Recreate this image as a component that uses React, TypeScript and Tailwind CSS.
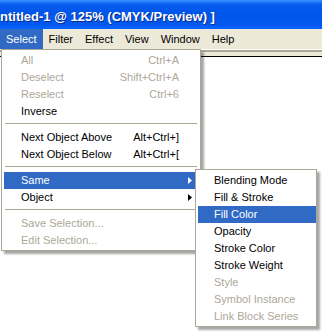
import React from "react";

type Item =
  | { sep: true }
  | { sep?: false; label: string; shortcut?: string; disabled?: boolean; sub?: boolean; active?: boolean };

const selectMenu: Item[] = [
  { label: "All", shortcut: "Ctrl+A", disabled: true },
  { label: "Deselect", shortcut: "Shift+Ctrl+A", disabled: true },
  { label: "Reselect", shortcut: "Ctrl+6", disabled: true },
  { label: "Inverse" },
  { sep: true },
  { label: "Next Object Above", shortcut: "Alt+Ctrl+]" },
  { label: "Next Object Below", shortcut: "Alt+Ctrl+[" },
  { sep: true },
  { label: "Same", sub: true, active: true },
  { label: "Object", sub: true },
  { sep: true },
  { label: "Save Selection...", disabled: true },
  { label: "Edit Selection...", disabled: true },
];

const sameMenu: Item[] = [
  { label: "Blending Mode" },
  { label: "Fill & Stroke" },
  { label: "Fill Color", active: true },
  { label: "Opacity" },
  { label: "Stroke Color" },
  { label: "Stroke Weight" },
  { label: "Style", disabled: true },
  { label: "Symbol Instance", disabled: true },
  { label: "Link Block Series", disabled: true },
];

const menuBar = ["Select", "Filter", "Effect", "View", "Window", "Help"];

function Arrow({ white }: { white?: boolean }) {
  return (
    <svg width="4" height="7" viewBox="0 0 4 7" className="mr-[8px] shrink-0">
      <polygon points="0,0 4,3.5 0,7" fill={white ? "#ffffff" : "#000000"} />
    </svg>
  );
}

function MenuRow({ item, indent }: { item: Item; indent: string }) {
  if (item.sep) {
    return (
      <div className="h-[9px] pt-[3px] pr-[3px]">
        <div className="ml-[1px] h-px bg-[#aca899]" />
      </div>
    );
  }
  const color = item.active ? "bg-[#316ac5] text-white" : item.disabled ? "text-[#aca899]" : "text-black";
  return (
    <div className={`flex h-[17px] items-center whitespace-nowrap ${indent} ${color}`}>
      <span className="flex-1">{item.label}</span>
      {item.shortcut && <span className="pr-[21px]">{item.shortcut}</span>}
      {item.sub && <Arrow white={item.active} />}
    </div>
  );
}

export default function App() {
  return (
    <div className="relative h-[332px] w-[322px] overflow-hidden bg-white text-[11px] font-['Liberation_Sans',Arial,sans-serif]">
      <div className="flex h-[29px] items-center pt-[4px] bg-[linear-gradient(to_bottom,#3d95ff_0px,#0a5ef0_4px,#0055ea_12px,#0058ee_24px,#0863ff_29px)]">
        <span className="whitespace-nowrap text-[13px] font-bold text-white [text-shadow:1px_1px_0_#0b2a8a]">
          ntitled-1 @ 125% (CMYK/Preview) ]
        </span>
      </div>

      <div className="flex h-[20px] bg-[#ece9d8]">
        {menuBar.map((m, i) => (
          <div
            key={m}
            className={`flex h-full items-center px-[6px] ${i === 0 ? "bg-[#316ac5] text-white" : "text-black"}`}
          >
            {m}
          </div>
        ))}
      </div>
      <div className="h-px bg-white" />
      <div className="h-[2px] bg-[#aca899]" />
      <div className="h-[4px] bg-[#ece9d8]" />
      <div className="h-px bg-black" />

      <div className="absolute left-[1px] top-[49px] w-[200px] border border-[#aca899] bg-white pb-[1px] pl-[2px] pt-[2px] shadow-[3px_3px_2px_rgba(0,0,0,0.35)]">
        {selectMenu.map((item, i) => (
          <MenuRow key={i} item={item} indent="pl-[17px]" />
        ))}
      </div>

      <div className="absolute left-[195px] top-[169px] w-[122px] border border-[#aca899] bg-white pb-[1px] pl-[2px] pt-[2px] shadow-[3px_3px_2px_rgba(0,0,0,0.35)]">
        {sameMenu.map((item, i) => (
          <MenuRow key={i} item={item} indent="pl-[16px]" />
        ))}
      </div>
    </div>
  );
}
